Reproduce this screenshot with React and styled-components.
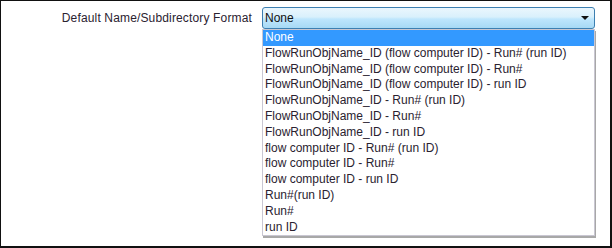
import React from "react";
import styled, { createGlobalStyle } from "styled-components";

const Global = createGlobalStyle`
  html, body { margin: 0; padding: 0; background: #fff; }
  body { font-family: "Liberation Sans", Arial, sans-serif; }
`;

const Frame = styled.div`
  box-sizing: border-box;
  width: 612px;
  height: 248px;
  background: #fff;
  border-style: solid;
  border-color: #111;
  border-width: 1px 2px 2px 1px;
  padding-top: 6px;
  position: relative;
`;

const Row = styled.div`
  display: flex;
  align-items: center;
  gap: 10px;
`;

const Label = styled.div`
  width: 251px;
  text-align: right;
  font-size: 12px;
  letter-spacing: 0.15px;
  color: #2a2230;
`;

const Select = styled.div`
  position: relative;
  box-sizing: border-box;
  width: 333px;
  height: 22px;
  border: 1px solid #3c7fb1;
  border-radius: 3px;
  background: linear-gradient(to bottom, #eaf6fd 0%, #d9f0fc 45%, #bee6fd 55%, #a7d9f5 100%);
  display: flex;
  align-items: center;
  padding: 0 5px 0 2px;
  font-size: 12px;
  color: #111;
`;

const Value = styled.span`
  flex: 1;
`;

const Arrow = styled.span`
  width: 0;
  height: 0;
  border-left: 4px solid transparent;
  border-right: 4px solid transparent;
  border-top: 4px solid #111;
`;

const List = styled.ul`
  position: absolute;
  top: 21px;
  left: -1px;
  box-sizing: border-box;
  width: 333px;
  margin: 0;
  padding: 0;
  list-style: none;
  background: #fff;
  border: 1px solid #c9c7d2;
  box-shadow: 1px 2px 0 #a8a8a8;
`;

const Item = styled.li`
  height: 15.8px;
  line-height: 15.8px;
  padding-left: 2px;
  font-size: 12px;
  color: ${(p) => (p.$selected ? "#fff" : "#2a2230")};
  background: ${(p) => (p.$selected ? "#3399ff" : "transparent")};
  white-space: nowrap;
`;

const options = [
  "None",
  "FlowRunObjName_ID (flow computer ID) - Run# (run ID)",
  "FlowRunObjName_ID (flow computer ID) - Run#",
  "FlowRunObjName_ID (flow computer ID) - run ID",
  "FlowRunObjName_ID - Run# (run ID)",
  "FlowRunObjName_ID - Run#",
  "FlowRunObjName_ID - run ID",
  "flow computer ID - Run# (run ID)",
  "flow computer ID - Run#",
  "flow computer ID - run ID",
  "Run#(run ID)",
  "Run#",
  "run ID",
];

export default function App() {
  return (
    <>
      <Global />
      <Frame>
        <Row>
          <Label>Default Name/Subdirectory Format</Label>
          <Select>
            <Value>None</Value>
            <Arrow />
            <List>
              {options.map((o, i) => (
                <Item key={o} $selected={i === 0}>
                  {o}
                </Item>
              ))}
            </List>
          </Select>
        </Row>
      </Frame>
    </>
  );
}
